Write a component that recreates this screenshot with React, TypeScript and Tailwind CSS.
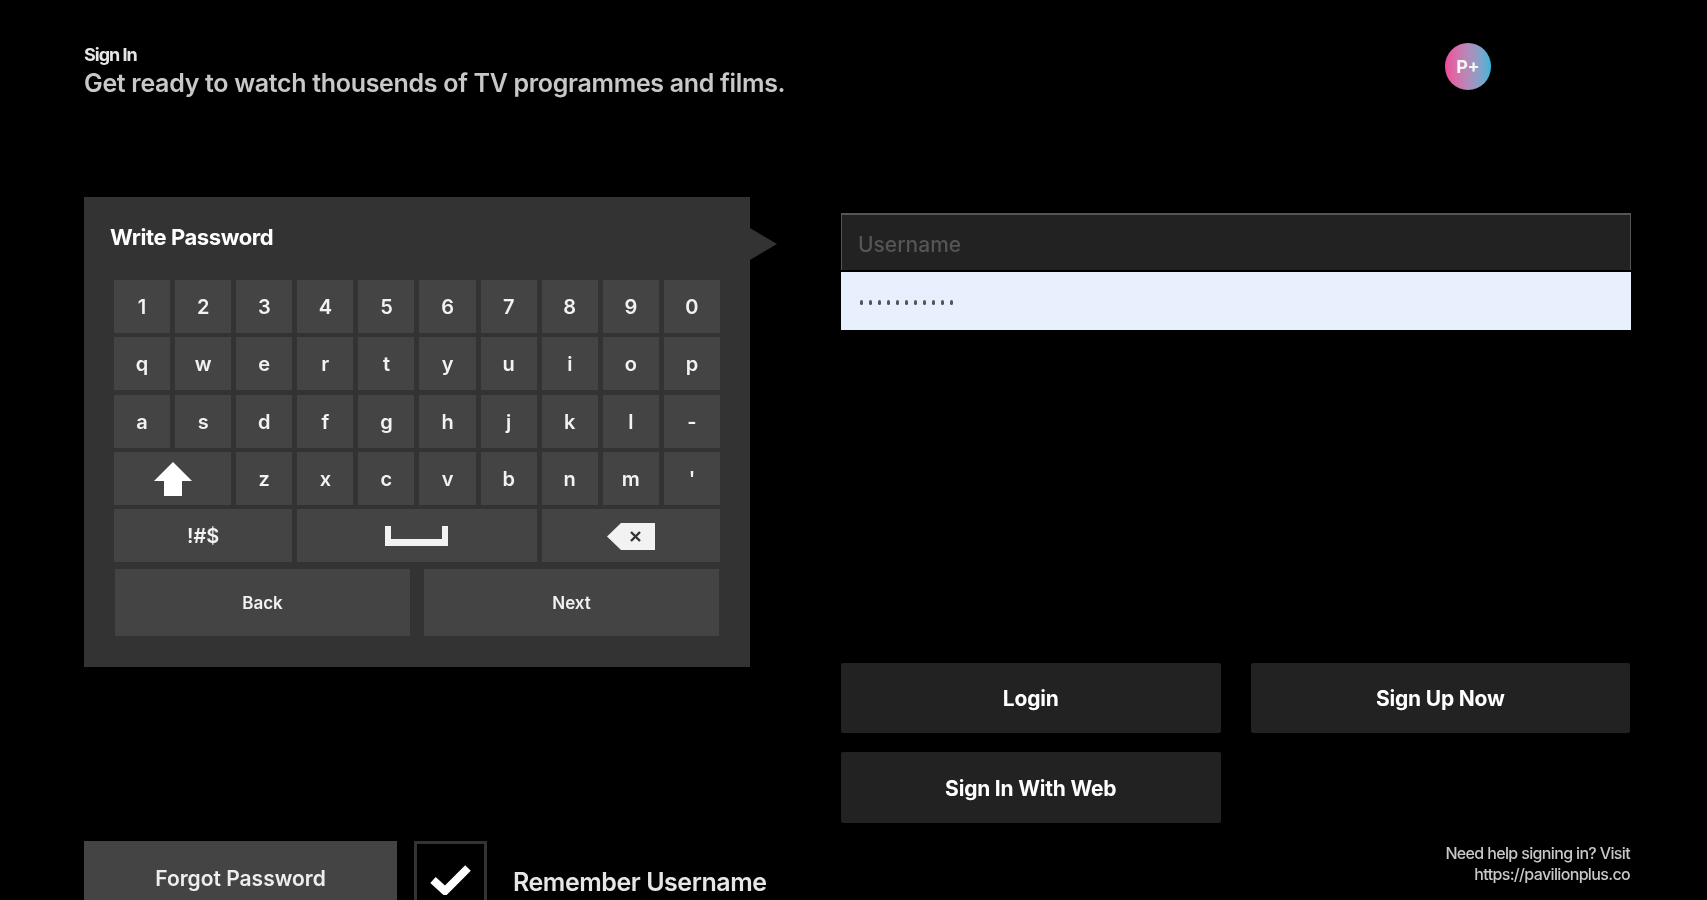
const font = { fontFamily: '"Inter", "Liberation Sans", sans-serif' };

const Key = ({ children, className = "" }: { children: React.ReactNode; className?: string }) => (
  <div className={`flex items-center justify-center bg-[#444444] pt-[1px] text-[20px] font-semibold leading-none text-[#f2f2f2] ${className}`}>
    {children}
  </div>
);

const Shift = () => (
  <svg width="38" height="34" viewBox="0 0 38 34" fill="#ffffff">
    <path d="M19 0 L38 19 L28 19 L28 34 L10 34 L10 19 L0 19 Z" />
  </svg>
);

const Space = () => (
  <svg width="63" height="20" viewBox="0 0 63 20" fill="#f2f2f2">
    <path d="M0 0 H6 V13 H57 V0 H63 V20 H0 Z" />
  </svg>
);

const Backspace = () => (
  <svg width="48" height="27" viewBox="0 0 48 27">
    <path d="M14 0 H48 V27 H14 L0 13.5 Z" fill="#f2f2f2" />
    <path d="M24 9 L33 18 M33 9 L24 18" stroke="#333333" strokeWidth="2.4" />
  </svg>
);

const Check = () => (
  <svg width="41" height="30" viewBox="0 0 41 30" fill="none" stroke="#ffffff" strokeWidth="8">
    <path d="M3 15 L15 26 L38 3" />
  </svg>
);

const rows = ["1234567890", "qwertyuiop", "asdfghjkl-"];

export default function App() {
  return (
    <div style={font} className="flex h-[900px] flex-col overflow-hidden bg-black pl-[84px] pr-[77px] pt-[43px] blur-[0.6px]">
      <header className="flex h-[48px] items-start justify-between">
        <div>
          <h1 className="mt-[1px] text-[18px] font-bold leading-[22px] tracking-[-1px] text-[#e6e6e6]">Sign In</h1>
          <p className="mt-[3px] whitespace-nowrap text-[25px] font-semibold leading-[28px] tracking-[-0.32px] text-[#c8c8c8]">
            Get ready to watch thousends of TV programmes and films.
          </p>
        </div>
        <div className="mr-[139px] flex h-[47px] w-[46px] items-center justify-center rounded-full bg-gradient-to-r from-[#f0479a] to-[#2fb4d8] text-[18px] font-bold leading-none text-[#f5f5f5]">
          P+
        </div>
      </header>

      <main className="mt-[106px] flex">
        <section className="w-[666px] shrink-0">
          <div className="relative h-[470px] bg-[#333333] pl-[30px] pt-[28px]">
            <h2 className="mb-[31px] -ml-[4px] text-[22px] font-bold leading-[24px] tracking-[-0.4px] text-white">Write Password</h2>
            <div className="absolute left-full top-[31px] h-0 w-0 border-y-[16px] border-l-[27px] border-y-transparent border-l-[#333333]" />
            <div className="grid w-[606px] grid-cols-10 auto-rows-[53px] gap-x-[5px] gap-y-[4.25px]">
              {rows.map((row) => row.split("").map((c) => <Key key={c}>{c}</Key>))}
              <Key className="col-span-2"><Shift /></Key>
              {"zxcvbnm'".split("").map((c) => <Key key={c}>{c}</Key>)}
              <Key className="col-span-3">!#$</Key>
              <Key className="col-span-4"><Space /></Key>
              <Key className="col-span-3"><Backspace /></Key>
            </div>
            <div className="ml-[1px] mt-[7px] flex gap-[14px]">
              <Key className="h-[67px] w-[295px] pt-[2px] !text-[17px]">Back</Key>
              <Key className="h-[67px] w-[295px] pt-[2px] !text-[17px]">Next</Key>
            </div>
          </div>
          <div className="mt-[174px] flex">
            <button className="h-[80px] w-[313px] shrink-0 bg-[#444444] pb-[5px] text-[21px] font-semibold text-[#eeeeee]">Forgot Password</button>
            <div className="ml-[17px] flex h-[80px] w-[73px] shrink-0 items-start justify-center border-[3px] border-[#333333] pt-[21px]">
              <Check />
            </div>
            <span className="ml-[26px] mt-[25px] whitespace-nowrap text-[25px] font-semibold leading-[32px] tracking-[-0.45px] text-[#e6e6e6]">Remember Username</span>
          </div>
        </section>

        <section className="ml-[91px] flex-1 pt-[16px]">
          <div className="-mr-[1px] flex h-[57px] items-center border-x border-t-2 border-[#555555] bg-[#222222] pl-[16px] pt-[3px] text-[21px] font-medium leading-none text-[#555555]">Username</div>
          <div className="-mr-[1px] mt-[2px] flex h-[58px] items-center gap-[6px] bg-[#e8f0fe] pl-[19px] pt-[2px]">
            {Array.from({ length: 11 }).map((_, i) => (
              <span key={i} className="h-[5px] w-[3px] rounded-full bg-[#555555]" />
            ))}
          </div>
          <div className="mt-[333px] grid grid-cols-2 gap-x-[30px] gap-y-[19px]">
            <button className="h-[70px] rounded-[2px] bg-[#222222] pt-[2px] text-[21px] font-bold tracking-[-0.2px] text-white">Login</button>
            <button className="h-[70px] rounded-[2px] bg-[#222222] pt-[2px] text-[21px] font-bold tracking-[-0.2px] text-white">Sign Up Now</button>
            <button className="h-[71px] rounded-[2px] bg-[#222222] pt-[2px] text-[21px] font-bold tracking-[-0.2px] text-white">Sign In With Web</button>
          </div>
          <p className="mt-[20px] text-right text-[16px] font-medium leading-[21px] tracking-[-0.65px] text-[#c8c8c8]">
            Need help signing in? Visit
            <br />
            https://pavilionplus.co
          </p>
        </section>
      </main>
    </div>
  );
}
